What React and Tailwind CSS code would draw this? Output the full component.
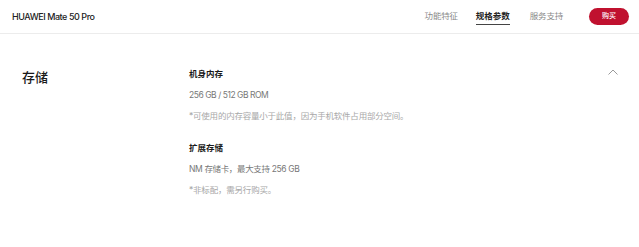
import React from "react";

const font = { fontFamily: "Inter, 'Noto Sans CJK SC', sans-serif" };

const Header = () => (
  <div className="flex h-[34px] items-center justify-between border-b border-[#ececec] pl-3 pr-[10px]">
    <div className="text-[9px] font-medium tracking-[-0.45px] text-[#222]">HUAWEI Mate 50 Pro</div>
    <div className="flex items-center">
      <span className="text-[8.5px] tracking-[-0.2px] text-[#8a8a8a]">功能特征</span>
      <span className="ml-[18px] border-b-[1.5px] border-[#444] pt-[2px] pb-[1px] text-[8.5px] font-bold text-[#222]">
        规格参数
      </span>
      <span className="ml-[20px] text-[8.5px] tracking-[-0.2px] text-[#8a8a8a]">服务支持</span>
      <button className="ml-[26px] flex h-[17px] w-[40px] items-center justify-center rounded-full bg-[#c0112f] text-[7px] font-medium text-white">
        购买
      </button>
    </div>
  </div>
);

const Line = ({ className, children }) => (
  <div className={`h-[21px] text-[8.5px] leading-[21px] ${className}`}>{children}</div>
);

export default function App() {
  return (
    <div className="h-[247px] w-[639px] bg-white" style={font}>
      <Header />
      <div className="flex pt-[30px] pl-[22px] pr-[21px]">
        <div className="w-[167px] text-[13px] font-medium leading-[26px] text-[#1a1a1a]">存储</div>
        <div className="flex flex-1 justify-between">
          <div>
            <Line className="font-bold text-[#1a1a1a]">机身内存</Line>
            <Line className="tracking-[-0.45px] text-[#777]">256 GB / 512 GB ROM</Line>
            <Line className="tracking-[-0.22px] text-[#a8a8a8]">*可使用的内存容量小于此值，因为手机软件占用部分空间。</Line>
            <div className="h-[11px]" />
            <Line className="font-bold text-[#1a1a1a]">扩展存储</Line>
            <Line className="tracking-[-0.35px] text-[#777]">NM 存储卡，最大支持 256 GB</Line>
            <Line className="tracking-[-0.2px] text-[#a8a8a8]">*非标配，需另行购买。</Line>
          </div>
          <svg width="10" height="6" viewBox="0 0 10 6" className="mt-[5px]">
            <path d="M0.5 5.5 L5 1 L9.5 5.5" fill="none" stroke="#9a9a9a" strokeWidth="1" />
          </svg>
        </div>
      </div>
    </div>
  );
}
